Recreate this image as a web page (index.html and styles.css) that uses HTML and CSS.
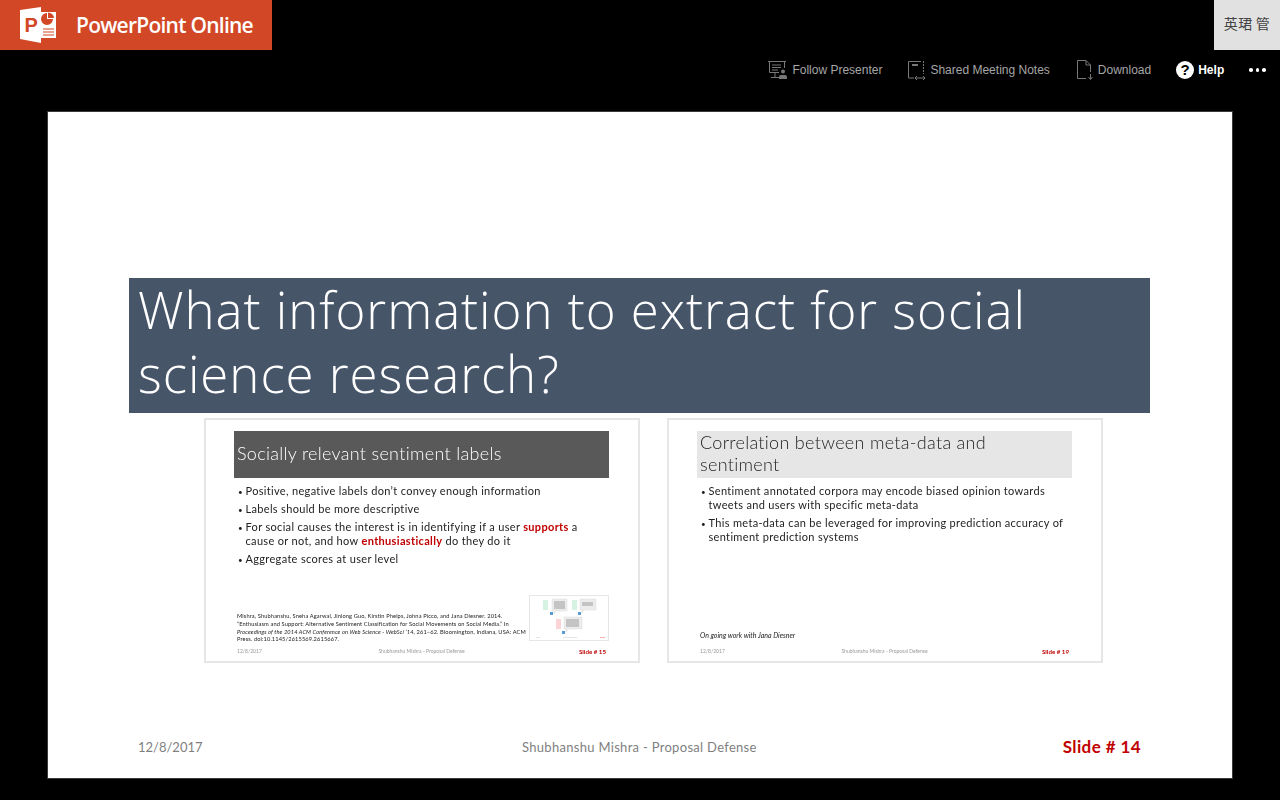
FILE: index.html
```html
<!DOCTYPE html>
<html lang="en">
<head>
    <meta charset="UTF-8">
    <meta name="viewport" content="width=device-width, initial-scale=1.0">
    <title>PowerPoint Online</title>
    <link rel="stylesheet" href="styles.css">
</head>
<body>
    <header class="topBar">
        <div class="brand">
            <svg class="brandIcon" width="38" height="38" viewBox="0 0 38 38">
                <path d="M1 4 L22 1 V37 L1 33 Z" fill="#fff"/>
                <text x="5.5" y="26" class="brandP">P</text>
                <path d="M22 6 H37 V32 H22 Z" fill="#fff"/>
                <path d="M28 7 A6 6 0 1 0 34 13 L28 13 Z" fill="#d24726"/>
                <path d="M29 6.5 A6 6 0 0 1 35 12 L29 12 Z" fill="#d24726"/>
                <path d="M24 23 H35 M24 26 H35 M24 29 H35" stroke="#d24726" stroke-width="1.2"/>
            </svg>
            <span class="brandName">PowerPoint Online</span>
        </div>
        <div class="userBox">英珺 管</div>
    </header>

    <nav class="toolbar">
        <div class="tool">
            <svg width="20" height="20" viewBox="0 0 20 20" fill="none" stroke="#777" stroke-width="1">
                <path d="M0 1.5 H18 M1.5 1.5 V12.5 H11 M16.5 1.5 V8 M4 5 H13 M4 7.5 H13 M4 10 H10 M7 12.5 V17.5 M3 17.5 H11"/>
                <circle cx="15" cy="11.5" r="2" fill="#777" stroke="none"/>
                <path d="M11 19 V17 Q11 15 13 15 H17 Q19 15 19 17 V19 Z" fill="#777" stroke="none"/>
            </svg>
            <span>Follow Presenter</span>
        </div>
        <div class="tool">
            <svg width="18" height="20" viewBox="0 0 18 20" fill="none" stroke="#777" stroke-width="1">
                <path d="M13 1.5 H0.5 V18 H6"/>
                <path d="M15.5 1 V14" stroke-dasharray="2 1"/>
                <path d="M4 5 H10" stroke-width="2"/>
                <path d="M7 18 H17 M9 16 L7 18 L9 20 M15 16 L17 18 L15 20"/>
            </svg>
            <span>Shared Meeting Notes</span>
        </div>
        <div class="tool toolDownload">
            <svg width="18" height="20" viewBox="0 0 18 20" fill="none" stroke="#777" stroke-width="1">
                <path d="M10 18.5 H1.5 V0.5 H10 L14.5 5 V12 M10 0.5 V5 H14.5"/>
                <path d="M14.5 14 V19 M12.5 17 L14.5 19.5 L16.5 17"/>
            </svg>
            <span>Download</span>
        </div>
        <div class="tool toolHelp">
            <span class="helpIcon">?</span>
            <span>Help</span>
        </div>
        <div class="moreDots"><i></i><i></i><i></i></div>
    </nav>

    <main class="slide">
        <h1 class="slideTitle"><span class="slideTitleText">What information to extract for social science research?</span></h1>

        <div class="thumbRow">
            <section class="thumb">
                <h2 class="thumbTitle thumbTitleDark">Socially relevant sentiment labels</h2>
                <ul class="thumbList">
                    <li>Positive, negative labels don’t convey enough information</li>
                    <li>Labels should be more descriptive</li>
                    <li>For social causes the interest is in identifying if a user <b>supports</b> a<br>cause or not, and how <b>enthusiastically</b> do they do it</li>
                    <li>Aggregate scores at user level</li>
                </ul>
                <div class="thumbBottom">
                    <p class="thumbRef">Mishra, Shubhanshu, Sneha Agarwal, Jinlong Guo, Kirstin Phelps, Johna Picco, and Jana Diesner. 2014.<br>“Enthusiasm and Support: Alternative Sentiment Classification for Social Movements on Social Media.” In<br><i>Proceedings of the 2014 ACM Conference on Web Science - WebSci ’14</i>, 261–62. Bloomington, Indiana, USA: ACM<br>Press. doi:10.1145/2615569.2615667.</p>
                    <svg class="miniSlide" width="80" height="46" viewBox="0 0 80 46">
                        <rect x="0.5" y="0.5" width="79" height="45" fill="#fff" stroke="#e6e6e6"/>
                        <rect x="14" y="5" width="5" height="10" fill="#d5f2e2"/>
                        <path d="M23 4 H38 V16 H27 L25 19 V16 H23 Z" fill="#ececec" stroke="#ddd" stroke-width="0.5"/>
                        <rect x="25" y="6" width="11" height="8" fill="#c4c4c4"/>
                        <rect x="21" y="17" width="3" height="3" fill="#5b9bd5"/>
                        <rect x="43" y="5" width="5" height="10" fill="#d5f2e2"/>
                        <path d="M51 4 H67 V15 H55 L53 18 V15 H51 Z" fill="#ececec" stroke="#ddd" stroke-width="0.5"/>
                        <rect x="53" y="7" width="11" height="4" fill="#c4c4c4"/>
                        <rect x="49" y="17" width="3" height="3" fill="#5b9bd5"/>
                        <rect x="27" y="24" width="5" height="10" fill="#fbd5d5"/>
                        <path d="M35 22 H53 V34 H39 L37 37 V34 H35 Z" fill="#ececec" stroke="#ddd" stroke-width="0.5"/>
                        <rect x="37" y="24" width="13" height="8" fill="#c4c4c4"/>
                        <rect x="33" y="36" width="3" height="3" fill="#5b9bd5"/>
                        <rect x="71" y="42" width="5" height="1" fill="#f4b0b0"/>
                        <rect x="34" y="42" width="14" height="1" fill="#e4e4e4"/>
                        <rect x="7" y="42" width="4" height="1" fill="#e4e4e4"/>
                    </svg>
                </div>
                <footer class="thumbFooter">
                    <span>12/8/2017</span>
                    <span>Shubhanshu Mishra - Proposal Defense</span>
                    <b>Slide # 15</b>
                </footer>
            </section>

            <section class="thumb">
                <h2 class="thumbTitle">Correlation between meta-data and<br>sentiment</h2>
                <ul class="thumbList">
                    <li>Sentiment annotated corpora may encode biased opinion towards<br>tweets and users with specific meta-data</li>
                    <li>This meta-data can be leveraged for improving prediction accuracy of<br>sentiment prediction systems</li>
                </ul>
                <div class="thumbBottom">
                    <p class="thumbNote">On going work with Jana Diesner</p>
                </div>
                <footer class="thumbFooter">
                    <span>12/8/2017</span>
                    <span>Shubhanshu Mishra - Proposal Defense</span>
                    <b>Slide # 19</b>
                </footer>
            </section>
        </div>

        <footer class="slideFooter">
            <span class="footDate">12/8/2017</span>
            <span class="footName">Shubhanshu Mishra - Proposal Defense</span>
            <b class="footNum">Slide # 14</b>
        </footer>
    </main>
</body>
</html>
```

FILE: styles.css
```css
* {
    box-sizing: border-box;
}
body {
    margin: 0;
    height: 800px;
    overflow: hidden;
    background-color: #000;
    font-family: "Liberation Sans", Arial, sans-serif;
}
.topBar {
    display: flex;
    justify-content: space-between;
    height: 50px;
}
.brand {
    display: flex;
    align-items: center;
    width: 272px;
    padding-left: 19px;
    background-color: #d24726;
    color: #fff;
}
.brandIcon {
    flex: none;
}
.brandP {
    font-family: "Liberation Sans", sans-serif;
    font-size: 20px;
    font-weight: 700;
    fill: #d24726;
}
.brandName {
    margin: 0 0 0 19px;
    font-family: "Open Sans", sans-serif;
    font-size: 21px;
    font-weight: 600;
    letter-spacing: -0.75px;
}
.userBox {
    width: 66px;
    background-color: #e1e1e1;
    color: #444;
    font-family: "Noto Sans CJK SC", sans-serif;
    font-size: 14px;
    letter-spacing: 0.3px;
    line-height: 47px;
    text-align: center;
}
.toolbar {
    display: flex;
    justify-content: flex-end;
    align-items: center;
    height: 40px;
    padding-right: 14px;
    color: #a6a6a6;
    font-size: 12px;
}
.tool {
    display: flex;
    align-items: center;
    gap: 4px;
    margin-right: 26px;
}
.toolDownload {
    margin-right: 25px;
}
.toolHelp {
    color: #fff;
    font-weight: 700;
    margin-right: 25px;
}
.helpIcon {
    width: 18px;
    height: 18px;
    border-radius: 50%;
    background-color: #fff;
    color: #000;
    font-size: 15px;
    font-weight: 700;
    line-height: 18px;
    text-align: center;
}
.moreDots {
    display: flex;
    gap: 3px;
}
.moreDots i {
    width: 3.6px;
    height: 3.6px;
    border-radius: 50%;
    background-color: #fff;
}
.slide {
    width: 1184px;
    height: 666px;
    margin: 22px 0 0 48px;
    padding: 166px 82px 0 81px;
    background-color: #fff;
    box-shadow: 0 0 0 1px #3a3a3a;
    font-family: Lato, sans-serif;
    font-variant-ligatures: none;
}
.slideTitle {
    display: flow-root;
    height: 135px;
    margin: 0;
    padding: 0 9px;
    background-color: #475569;
    color: #fff;
    font-family: "Open Sans", sans-serif;
    font-size: 51px;
    font-weight: 300;
    letter-spacing: 0.95px;
    line-height: 64px;
}
.slideTitleText {
    display: block;
    margin-top: -1px;
}
.thumbRow {
    display: flex;
    gap: 27px;
    margin: 5px 0 0 75px;
}
.thumb {
    display: flex;
    flex-direction: column;
    width: 436px;
    height: 245px;
    padding: 11px 29px 0 28px;
    border: 2px solid #e6e6e6;
    color: #222;
    filter: blur(0.3px);
}
.thumbTitle {
    height: 47px;
    margin: 0;
    padding: 0 3px;
    background-color: #e6e6e6;
    font-size: 18px;
    font-weight: 300;
    letter-spacing: 0.3px;
    line-height: 22px;
}
.thumbTitleDark {
    padding-top: 11px;
    background-color: #595959;
    color: #fff;
}
.thumbList {
    margin: 6px 0 0;
    padding: 0 0 0 11.5px;
    font-size: 11px;
    letter-spacing: 0.33px;
    line-height: 14px;
    list-style: none;
}
.thumbList li {
    margin-bottom: 4px;
}
.thumbList li::before {
    content: "•";
    display: inline-block;
    width: 7.5px;
    margin-left: -7.5px;
    font-size: 8px;
    line-height: 8px;
}
.thumbList b {
    color: #c00000;
}
.thumbBottom {
    display: flex;
    flex: 1;
    align-items: flex-end;
    justify-content: space-between;
}
.thumbRef {
    margin: 0 0 -2px 3px;
    font-size: 5.7px;
    letter-spacing: 0.12px;
    line-height: 7.7px;
    white-space: nowrap;
}
.thumbNote {
    margin: 0 0 2px 3px;
    font-size: 7px;
    font-style: italic;
}
.miniSlide {
    flex: none;
}
.thumbFooter {
    display: grid;
    grid-template-columns: 1fr 1fr 1fr;
    align-items: center;
    height: 20px;
    padding: 0 3px;
    color: #999;
    font-size: 5px;
}
.thumbFooter span:nth-child(2) {
    text-align: center;
    white-space: nowrap;
}
.thumbFooter b {
    color: #c00000;
    font-size: 6.2px;
    text-align: right;
}
.slideFooter {
    display: flex;
    align-items: center;
    margin-top: 73px;
    padding: 0 9px;
    color: #7f7f7f;
    font-size: 13px;
}
.footDate {
    width: 384px;
}
.footName {
    width: 380px;
    letter-spacing: 0.3px;
}
.footNum {
    flex: 1;
    color: #c00000;
    font-size: 17px;
    letter-spacing: 0.4px;
    text-align: right;
}
```
